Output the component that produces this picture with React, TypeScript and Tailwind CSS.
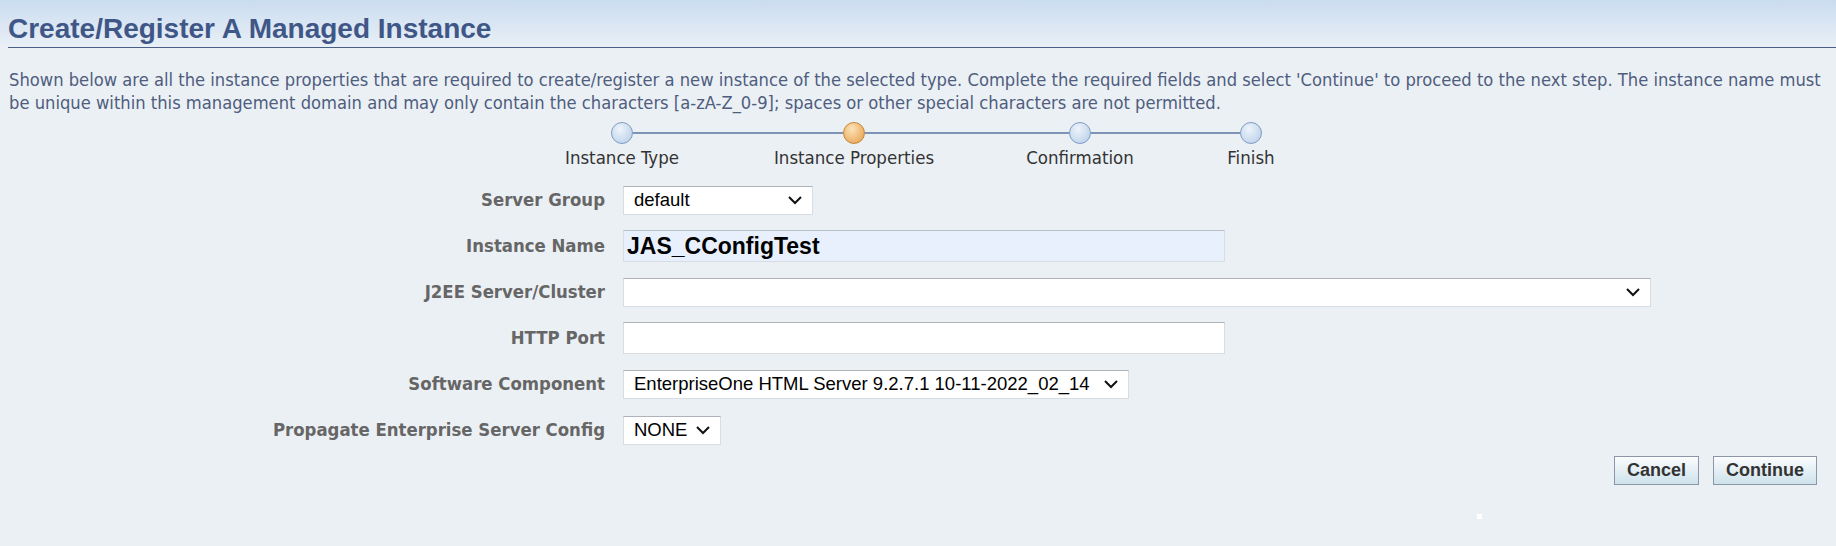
import React from "react";

const TAHOMA = "font-['DejaVu_Sans_Condensed','DejaVu_Sans',sans-serif]";
const ARIAL = "font-['Liberation_Sans',Arial,sans-serif]";

function Chevron() {
  return (
    <svg width="16" height="10" viewBox="0 0 16 10" className="shrink-0">
      <path d="M2 2 L8 8 L14 2" fill="none" stroke="#111" strokeWidth="2" />
    </svg>
  );
}

function Select({ value, width }: { value: string; width: string }) {
  return (
    <div
      className={`${width} h-[29px] flex items-center justify-between gap-[6px] bg-white border border-[#d9dde2] border-t-[#aeb3b9] pl-[10px] pr-[9px] text-[18.5px] text-black ${ARIAL}`}
    >
      <span className="whitespace-nowrap">{value}</span>
      <Chevron />
    </div>
  );
}

const steps = [
  { label: "Instance Type", w: "w-[232px]", active: false },
  { label: "Instance Properties", w: "w-[232px]", active: true },
  { label: "Confirmation", w: "w-[220px]", active: false },
  { label: "Finish", w: "w-[122px]", active: false },
];

function Stop({ active }: { active: boolean }) {
  return active ? (
    <div className="w-[22px] h-[22px] rounded-full border border-[#c98530] bg-radial-[at_40%_30%] from-[#fde3b8] to-[#e49a45]" />
  ) : (
    <div className="w-[22px] h-[22px] rounded-full border border-[#7f9dc6] bg-radial-[at_40%_30%] from-[#eef4fb] to-[#b4cbe6]" />
  );
}

export default function App() {
  return (
    <div className="relative w-[1836px] h-[546px] overflow-hidden bg-[#ebf0f5]">
      <div className="bg-linear-to-b from-[#cadcf0] to-[#eaf0f6] pt-[13px]">
        <h1
          className={`ml-[8px] border-b border-[#4a5f88] pb-[2px] text-[28px] leading-[32px] font-bold text-[#3f5787] ${ARIAL}`}
        >
          Create/Register A Managed Instance
        </h1>
      </div>

      <p className={`mt-[20px] pl-[9px] w-[1834px] text-[18.2px] leading-[23px] text-[#4f5d7e] ${TAHOMA}`}>
        Shown below are all the instance properties that are required to create/register a new instance of the
        selected type. Complete the required fields and select 'Continue' to proceed to the next step. The instance
        name must be unique within this management domain and may only contain the characters [a-zA-Z_0-9]; spaces
        or other special characters are not permitted.
      </p>

      {/* train */}
      <div className="mt-[8px] ml-[611px] flex items-center h-[22px]">
        <Stop active={false} />
        <div className="w-[210px] h-[2px] bg-[#7c93b6]" />
        <Stop active={true} />
        <div className="w-[204px] h-[2px] bg-[#7c93b6]" />
        <Stop active={false} />
        <div className="w-[149px] h-[2px] bg-[#7c93b6]" />
        <Stop active={false} />
      </div>
      <div className={`mt-[2px] ml-[506px] flex text-[18.5px] leading-[23px] text-[#333] ${TAHOMA}`}>
        {steps.map((s) => (
          <div key={s.label} className={`${s.w} text-center whitespace-nowrap`}>
            {s.label}
          </div>
        ))}
      </div>

      {/* form */}
      <div className="mt-[8px] grid grid-cols-[605px_1fr] gap-x-[18px]">
        <Label>Server Group</Label>
        <div className="h-[46px] flex items-center">
          <Select value="default" width="w-[190px]" />
        </div>

        <Label>Instance Name</Label>
        <div className="h-[46px] flex items-center">
          <div
            className={`w-[602px] h-[32px] flex items-center bg-[#e8f0fe] border border-[#d9dde2] border-t-[#b9bfc6] pl-[3px] text-[23px] font-bold text-black ${ARIAL}`}
          >
            JAS_CConfigTest
          </div>
        </div>

        <Label>J2EE Server/Cluster</Label>
        <div className="h-[46px] flex items-center">
          <Select value="" width="w-[1028px]" />
        </div>

        <Label>HTTP Port</Label>
        <div className="h-[46px] flex items-center">
          <div className="w-[602px] h-[32px] bg-white border border-[#d9dde2] border-t-[#aeb3b9]" />
        </div>

        <Label>Software Component</Label>
        <div className="h-[46px] flex items-center">
          <Select value="EnterpriseOne HTML Server 9.2.7.1 10-11-2022_02_14" width="w-[506px]" />
        </div>

        <Label>Propagate Enterprise Server Config</Label>
        <div className="h-[46px] flex items-center">
          <Select value="NONE" width="w-[98px]" />
        </div>
      </div>

      {/* buttons */}
      <div className="mt-[3px] pr-[19px] flex justify-end gap-[14px]">
        <Button>Cancel</Button>
        <Button>Continue</Button>
      </div>

      <div className="absolute left-[1477px] top-[514px] w-[5px] h-[5px] bg-white" />
    </div>
  );
}

function Label({ children }: { children: React.ReactNode }) {
  return (
    <div className={`h-[46px] flex items-center justify-end text-[18.4px] font-bold text-[#666] whitespace-nowrap ${TAHOMA}`}>
      {children}
    </div>
  );
}

function Button({ children }: { children: React.ReactNode }) {
  return (
    <div
      className={`h-[29px] px-[12px] flex items-center border border-[#8c96a6] bg-linear-to-b from-[#fbfcfd] to-[#cde2ec] text-[18px] font-bold text-[#333] ${ARIAL}`}
    >
      {children}
    </div>
  );
}
